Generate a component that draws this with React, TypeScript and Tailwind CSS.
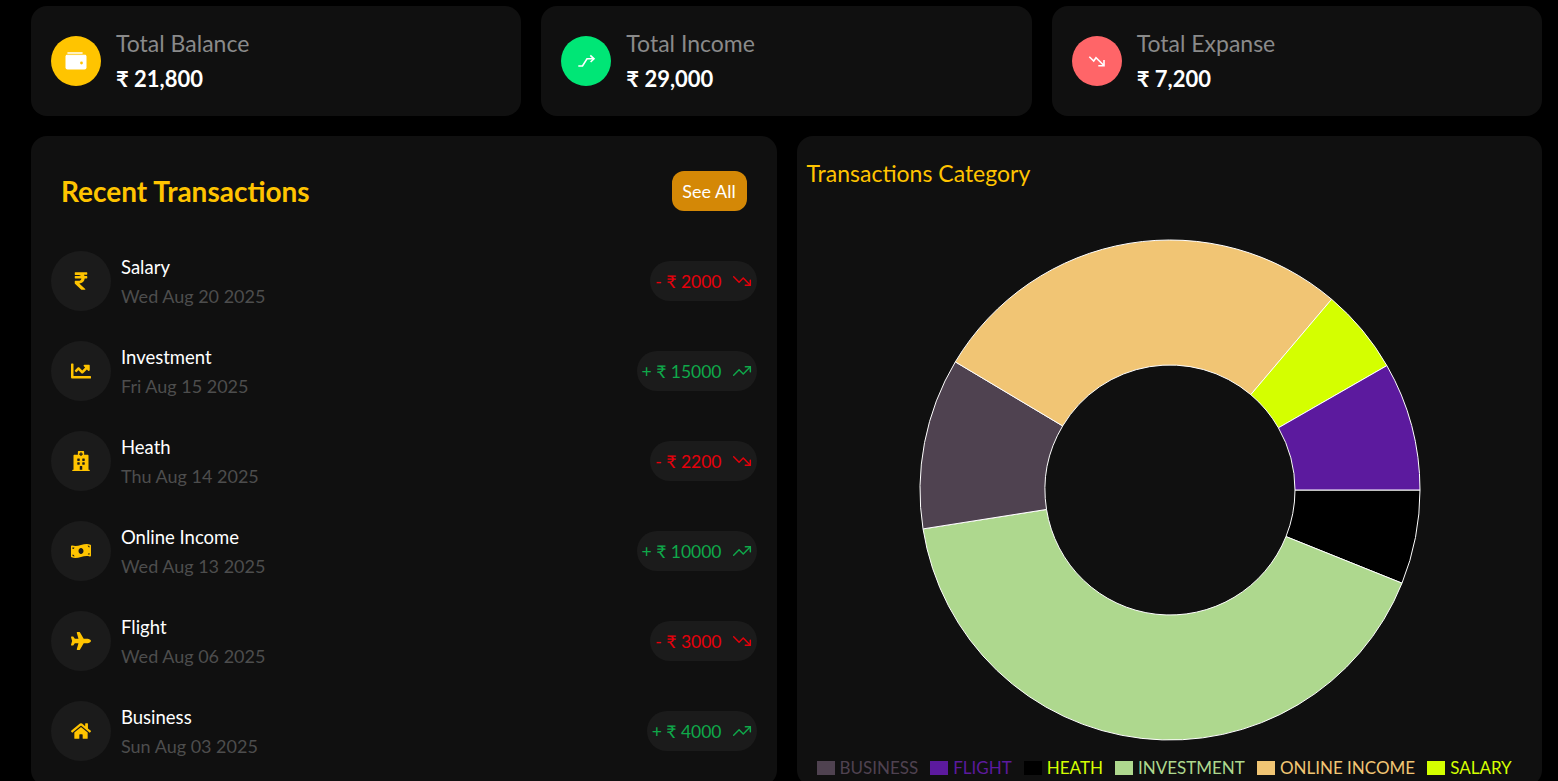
import type { ReactNode } from "react";
import { FaRupeeSign, FaChartLine, FaHospital, FaMoneyBillWave, FaPlane, FaHome } from "react-icons/fa";
import { TrendingUp, TrendingDown } from "lucide-react";

const WalletIcon = () => (
  <svg width="22" height="18" viewBox="0 0 22 18" fill="none">
    <path d="M3 1 H17" stroke="#ffffff" strokeWidth="1.6" strokeLinecap="round" />
    <rect x="0.5" y="2.5" width="21" height="15" rx="2" fill="#ffffff" />
    <path d="M2 2.6 H20" stroke="#ffc400" strokeWidth="0.8" opacity="0.6" />
    <circle cx="16.5" cy="11" r="1.4" fill="#ffc400" />
  </svg>
);

const IncomeIcon = () => (
  <svg width="20" height="20" viewBox="0 0 20 20" fill="none" stroke="#ffffff" strokeWidth="1.6">
    <path d="M2.3 15 H6.5 L11 7.8 H17.5" />
    <path d="M14.3 4.3 L18 7.8 L14.6 11" />
  </svg>
);

const ExpenseIcon = () => (
  <svg width="20" height="20" viewBox="0 0 20 20" fill="none" stroke="#ffffff" strokeWidth="1.6">
    <path d="M2.3 5.7 L6.7 10 L9 6.7 L16.7 14.3" />
    <path d="M17 9 V14.7 H11.3" />
  </svg>
);

const stats = [
  { label: "Total Balance", value: "₹ 21,800", bg: "bg-[#ffc400]", icon: <WalletIcon /> },
  { label: "Total Income", value: "₹ 29,000", bg: "bg-[#00e676]", icon: <IncomeIcon /> },
  { label: "Total Expanse", value: "₹ 7,200", bg: "bg-[#ff6568]", icon: <ExpenseIcon /> },
];

const transactions: { name: string; date: string; amount: string; up: boolean; icon: ReactNode }[] = [
  { name: "Salary", date: "Wed Aug 20 2025", amount: "- ₹ 2000", up: false, icon: <FaRupeeSign /> },
  { name: "Investment", date: "Fri Aug 15 2025", amount: "+ ₹ 15000", up: true, icon: <FaChartLine /> },
  { name: "Heath", date: "Thu Aug 14 2025", amount: "- ₹ 2200", up: false, icon: <FaHospital /> },
  { name: "Online Income", date: "Wed Aug 13 2025", amount: "+ ₹ 10000", up: true, icon: <FaMoneyBillWave /> },
  { name: "Flight", date: "Wed Aug 06 2025", amount: "- ₹ 3000", up: false, icon: <FaPlane /> },
  { name: "Business", date: "Sun Aug 03 2025", amount: "+ ₹ 4000", up: true, icon: <FaHome /> },
];

const slices = [
  { value: 2200, color: "#000000" },
  { value: 15000, color: "#aed88e" },
  { value: 4000, color: "#4f4250" },
  { value: 10000, color: "#f1c574" },
  { value: 2000, color: "#d4ff00" },
  { value: 3000, color: "#5c1a9e" },
];

const legend = [
  { label: "BUSINESS", box: "bg-[#4f4250]", text: "text-[#4f4250]" },
  { label: "FLIGHT", box: "bg-[#5c1a9e]", text: "text-[#5c1a9e]" },
  { label: "HEATH", box: "bg-black", text: "text-[#d4ff00]" },
  { label: "INVESTMENT", box: "bg-[#aed88e]", text: "text-[#aed88e]" },
  { label: "ONLINE INCOME", box: "bg-[#f1c574]", text: "text-[#f1c574]" },
  { label: "SALARY", box: "bg-[#d4ff00]", text: "text-[#d4ff00]" },
];

const Donut = () => {
  const total = slices.reduce((sum, s) => sum + s.value, 0);
  const outer = 250;
  const inner = 125;
  let angle = 0;
  const point = (r: number, a: number) => `${r * Math.cos(a)} ${r * Math.sin(a)}`;

  return (
    <svg width="502" height="502" viewBox="-251 -251 502 502">
      {slices.map((s) => {
        const start = angle;
        const end = angle + (s.value / total) * Math.PI * 2;
        angle = end;
        const large = end - start > Math.PI ? 1 : 0;
        const d = `M ${point(outer, start)} A ${outer} ${outer} 0 ${large} 1 ${point(outer, end)} L ${point(inner, end)} A ${inner} ${inner} 0 ${large} 0 ${point(inner, start)} Z`;
        return <path key={s.color} d={d} fill={s.color} stroke="#ffffff" strokeWidth="1" />;
      })}
    </svg>
  );
};

export default function App() {
  return (
    <div className="h-[781px] overflow-hidden bg-black pl-[31px] pr-4 pt-1.5 font-['Lato','Liberation_Sans',sans-serif]">
      <div className="grid grid-cols-3 gap-5">
        {stats.map((s) => (
          <div key={s.label} className="flex h-[110px] items-center gap-[15px] rounded-2xl bg-[#101010] px-5">
            <div className={`flex h-[50px] w-[50px] items-center justify-center rounded-full text-white ${s.bg}`}>
              {s.icon}
            </div>
            <div className="flex flex-col gap-1.5">
              <p className="text-[23px] leading-[30px] text-[#8a8a8a]">{s.label}</p>
              <p className="text-[22px] leading-[30px] font-bold text-white">{s.value}</p>
            </div>
          </div>
        ))}
      </div>

      <div className="mt-5 grid grid-cols-2 gap-5">
        <div className="h-[650px] rounded-2xl bg-[#101010] px-5 pt-[35px]">
          <div className="mb-10 flex h-10 items-center justify-between px-2.5">
            <h2 className="text-[28px] font-bold text-[#ffc400]">Recent Transactions</h2>
            <button className="h-10 w-[75px] rounded-xl bg-[#d48806] text-lg text-white">See All</button>
          </div>
          <div className="flex flex-col gap-[30px]">
            {transactions.map((t) => (
              <div key={t.name} className="flex items-center justify-between">
                <div className="flex items-center gap-2.5">
                  <div className="flex h-[60px] w-[60px] items-center justify-center rounded-full bg-[#1b1b1b] text-xl text-[#ffc400]">
                    {t.icon}
                  </div>
                  <div className="flex flex-col gap-[3px]">
                    <p className="mt-px text-[18.5px] leading-[26px] text-white">{t.name}</p>
                    <p className="text-lg leading-[26px] text-[#4d4d4d]">{t.date}</p>
                  </div>
                </div>
                <div className={`flex h-10 items-center gap-2.5 rounded-[20px] bg-[#1b1b1b] px-[5px] text-[17.5px] ${t.up ? "text-[#0fa94a]" : "text-[#e7000b]"}`}>
                  <span className="pt-0.5">{t.amount}</span>
                  {t.up ? <TrendingUp size={20} strokeWidth={1.75} /> : <TrendingDown size={20} strokeWidth={1.75} />}
                </div>
              </div>
            ))}
          </div>
        </div>

        <div className="h-[650px] rounded-2xl bg-[#101010] px-2.5 pt-[21px]">
          <h2 className="text-[23px] leading-8 text-[#ffc400]">Transactions Category</h2>
          <div className="mt-[50px] flex justify-center pl-0.5">
            <Donut />
          </div>
          <div className="mt-[15px] ml-2.5 flex items-center gap-3">
            {legend.map((l) => (
              <div key={l.label} className="flex items-center gap-[5px]">
                <span className={`h-3.5 w-[18px] ${l.box}`} />
                <span className={`text-[17px] leading-6 ${l.text}`}>{l.label}</span>
              </div>
            ))}
          </div>
        </div>
      </div>
    </div>
  );
}
